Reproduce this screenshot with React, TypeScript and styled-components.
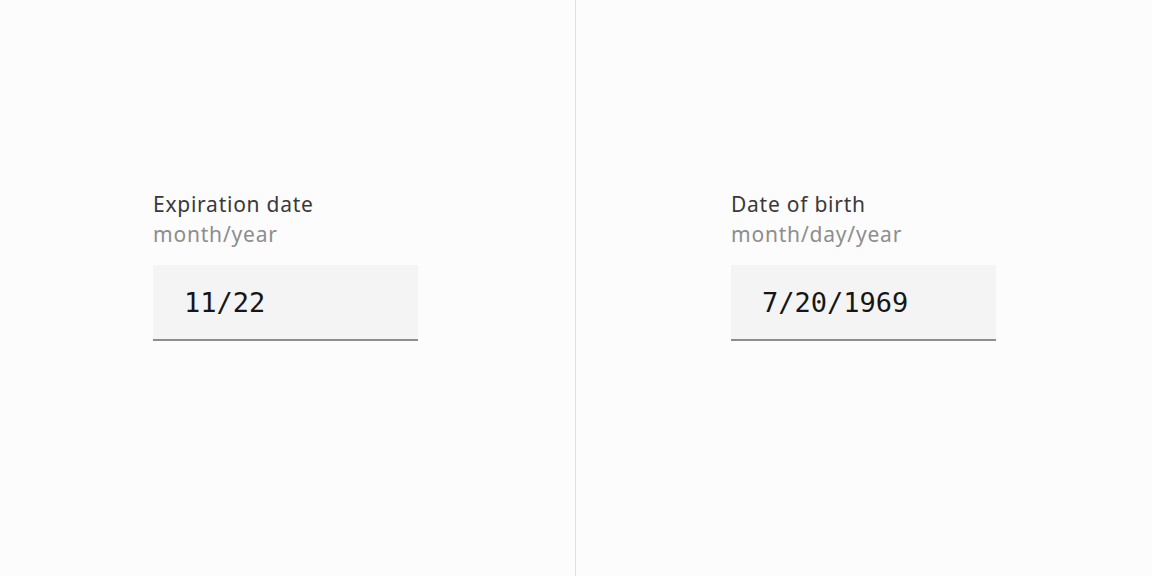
import React from "react";
import styled, { createGlobalStyle } from "styled-components";

const GlobalStyle = createGlobalStyle`
  html, body {
    margin: 0;
    padding: 0;
    background: #fcfcfc;
  }
  #root {
    height: 576px;
  }
`;

const Page = styled.div`
  display: grid;
  grid-template-columns: 575px 1px 1fr;
  width: 1152px;
  height: 576px;
  background: #fcfcfc;
`;

const Divider = styled.div`
  background: #e0e0e0;
`;

const Panel = styled.section<{ $inset: number }>`
  display: flex;
  padding-top: 190px;
  padding-left: ${(p) => p.$inset}px;
`;

const Field = styled.div`
  display: flex;
  flex-direction: column;
  width: 265px;
`;

const Label = styled.label`
  font-family: "Noto Sans", "Open Sans", sans-serif;
  font-size: 21px;
  line-height: 28px;
  color: #393939;
  letter-spacing: 0.75px;
`;

const Helper = styled.span`
  font-family: "Noto Sans", "Open Sans", sans-serif;
  font-size: 21px;
  line-height: 32px;
  color: #8d8d8d;
  letter-spacing: 0.8px;
`;

const Input = styled.div`
  margin-top: 15px;
  height: 74px;
  display: flex;
  align-items: center;
  padding-left: 31px;
  background: #f4f4f4;
  border-bottom: 2px solid #8d8d8d;
  font-family: "DejaVu Sans Mono", "Liberation Mono", monospace;
  font-size: 27px;
  color: #161616;
`;

type FieldProps = { label: string; helper: string; value: string };

const DateField = ({ label, helper, value }: FieldProps) => (
  <Field>
    <Label>{label}</Label>
    <Helper>{helper}</Helper>
    <Input>{value}</Input>
  </Field>
);

export default function App() {
  return (
    <>
      <GlobalStyle />
      <Page>
        <Panel $inset={153}>
          <DateField label="Expiration date" helper="month/year" value="11/22" />
        </Panel>
        <Divider />
        <Panel $inset={155}>
          <DateField label="Date of birth" helper="month/day/year" value="7/20/1969" />
        </Panel>
      </Page>
    </>
  );
}
